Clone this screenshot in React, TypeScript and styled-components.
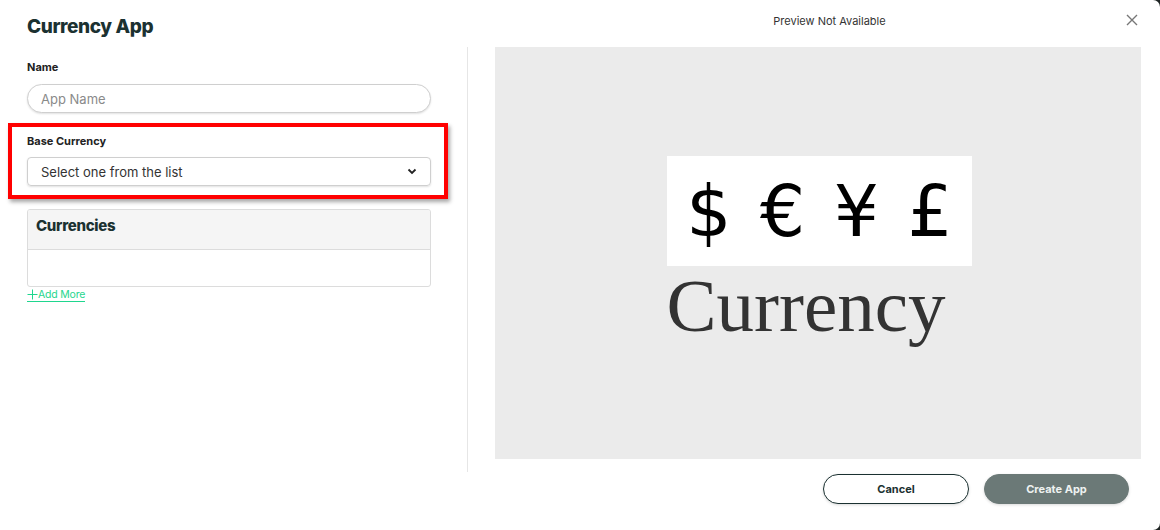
import styled, { createGlobalStyle } from "styled-components";

const GlobalStyle = createGlobalStyle`
    html, body {
        margin: 0;
        padding: 0;
        background: #1f2524;
    }
    body {
        font-family: Inter, "Noto Sans", "Liberation Sans", sans-serif;
        color: #1d2a2a;
    }
`

const Modal = styled.div`
    width: 1160px;
    height: 530px;
    background: #ffffff;
    border-radius: 0 7px 7px 0;
    display: flex;
    overflow: hidden;
`

const FormPane = styled.section`
    width: 468px;
    display: flex;
    flex-direction: column;
    flex-shrink: 0;
`

const Title = styled.h1`
    margin: 0;
    height: 47px;
    padding: 16px 0 0 27px;
    box-sizing: border-box;
    font-size: 19px;
    line-height: 22px;
    font-weight: 800;
    letter-spacing: -0.4px;
    color: #1b3131;
`

const FormBody = styled.div`
    height: 425px;
    box-sizing: border-box;
    border-right: 1px solid #e6e6e6;
    padding: 13px 36px 0 27px;
    display: flex;
    flex-direction: column;
`

const Label = styled.label<{ $tight?: boolean }>`
    display: block;
    font-size: 11px;
    font-weight: 700;
    color: #222;
    line-height: 14px;
    margin-bottom: ${(p) => (p.$tight ? "9px" : "10px")};
`

const TextInput = styled.input`
    width: 404px;
    height: 29px;
    box-sizing: border-box;
    border: 1px solid #cfcfcf;
    border-radius: 15px;
    box-shadow: 0 1px 2px rgba(0, 0, 0, 0.12);
    padding: 0 13px;
    font-family: inherit;
    font-size: 13px;
    color: #333;
    outline: none;
    &::placeholder {
        color: #8a8a8a;
    }
`

const Highlight = styled.div`
    margin: 10px -17px 0 -19px;
    border: 4px solid #ff0000;
    padding: 7px 13px 9px 15px;
    box-shadow: 2px 3px 4px rgba(0, 0, 0, 0.35);
`

const Select = styled.div`
    width: 404px;
    height: 29px;
    box-sizing: border-box;
    border: 1px solid #cfcfcf;
    border-radius: 4px;
    box-shadow: 0 1px 2px rgba(0, 0, 0, 0.12);
    padding: 0 13px;
    display: flex;
    align-items: center;
    justify-content: space-between;
    font-size: 13px;
    color: #333;
`

const Card = styled.div`
    margin-top: 10px;
    width: 404px;
    box-sizing: border-box;
    border: 1px solid #dcdcdc;
    border-radius: 3px;
    overflow: hidden;
`

const CardHeader = styled.div`
    height: 40px;
    box-sizing: border-box;
    background: #f5f5f5;
    border-bottom: 1px solid #dcdcdc;
    padding: 6px 8px 0;
    font-size: 15px;
    font-weight: 800;
    letter-spacing: -0.3px;
    color: #1b3131;
`

const CardBody = styled.div`
    height: 36px;
`

const AddMore = styled.a`
    align-self: flex-start;
    display: flex;
    align-items: center;
    font-size: 10.5px;
    letter-spacing: -0.2px;
    color: #1fd68e;
    cursor: pointer;
    line-height: 14px;
    border-bottom: 1px solid #1fd68e;
    height: 13px;
    margin-top: 1px;
`

const PreviewPane = styled.section`
    flex: 1;
    display: flex;
    flex-direction: column;
`

const PreviewHeader = styled.header`
    height: 47px;
    display: flex;
    align-items: center;
    justify-content: center;
    position: relative;
    font-size: 11px;
    color: #333;
    padding-left: 31px;
    padding-bottom: 5px;
    box-sizing: border-box;
`

const CloseButton = styled.button`
    position: absolute;
    right: 22px;
    top: 14px;
    border: none;
    background: none;
    padding: 0;
    cursor: pointer;
    display: flex;
`

const PreviewBox = styled.div`
    margin: 0 19px 0 27px;
    height: 412px;
    background: #ebebeb;
    display: flex;
    align-items: center;
    justify-content: center;
`

const Artwork = styled.div`
    display: flex;
    flex-direction: column;
    align-items: flex-start;
    margin-top: -7px;
    padding-left: 2px;
`

const SymbolStrip = styled.div`
    width: 305px;
    height: 110px;
    background: #ffffff;
    display: flex;
    align-items: center;
    justify-content: center;
    padding-left: 4px;
    box-sizing: border-box;
    font-family: "DejaVu Sans", sans-serif;
    font-size: 71px;
    letter-spacing: 3px;
    color: #000;
    white-space: pre;
    line-height: 1;
`

const Wordmark = styled.div`
    font-family: "Liberation Serif", serif;
    font-size: 75px;
    line-height: 1;
    color: #333;
    margin-top: 2px;
`

const Footer = styled.footer`
    display: flex;
    justify-content: flex-end;
    gap: 15px;
    padding: 15px 31px 0 0;
`

const Button = styled.button<{ $primary?: boolean }>`
    width: ${(p) => (p.$primary ? "145px" : "146px")};
    height: 30px;
    border-radius: 15px;
    font-family: inherit;
    font-size: 11px;
    font-weight: 700;
    cursor: pointer;
    border: 1px solid ${(p) => (p.$primary ? "#6b7977" : "#1b3131")};
    background: ${(p) => (p.$primary ? "#6b7977" : "#ffffff")};
    color: ${(p) => (p.$primary ? "#eef2f1" : "#1b3131")};
    box-shadow: 0 1px 3px rgba(0, 0, 0, 0.15);
`

const App = () => {
    return (
        <>
            <GlobalStyle />
            <Modal>
                <FormPane>
                    <Title>Currency App</Title>
                    <FormBody>
                        <Label>Name</Label>
                        <TextInput placeholder="App Name" />
                        <Highlight>
                            <Label $tight>Base Currency</Label>
                            <Select>
                                <span>Select one from the list</span>
                                <svg width="10" height="7" viewBox="0 0 10 7">
                                    <path d="M1.5 1.5 L5 5 L8.5 1.5" fill="none" stroke="#222" strokeWidth="1.8" />
                                </svg>
                            </Select>
                        </Highlight>
                        <Card>
                            <CardHeader>Currencies</CardHeader>
                            <CardBody />
                        </Card>
                        <AddMore>
                            <svg width="11" height="11" viewBox="0 0 11 11">
                                <path d="M5.5 0.5 V10.5 M0.5 5.5 H10.5" stroke="#1fd68e" strokeWidth="1" />
                            </svg>
                            Add More
                        </AddMore>
                    </FormBody>
                </FormPane>
                <PreviewPane>
                    <PreviewHeader>
                        Preview Not Available
                        <CloseButton aria-label="Close">
                            <svg width="12" height="12" viewBox="0 0 12 12">
                                <path d="M1 1 L11 11 M11 1 L1 11" stroke="#777" strokeWidth="1.4" />
                            </svg>
                        </CloseButton>
                    </PreviewHeader>
                    <PreviewBox>
                        <Artwork>
                            <SymbolStrip>{"$ € ¥ £"}</SymbolStrip>
                            <Wordmark>Currency</Wordmark>
                        </Artwork>
                    </PreviewBox>
                    <Footer>
                        <Button>Cancel</Button>
                        <Button $primary>Create App</Button>
                    </Footer>
                </PreviewPane>
            </Modal>
        </>
    );
}

export default App;
